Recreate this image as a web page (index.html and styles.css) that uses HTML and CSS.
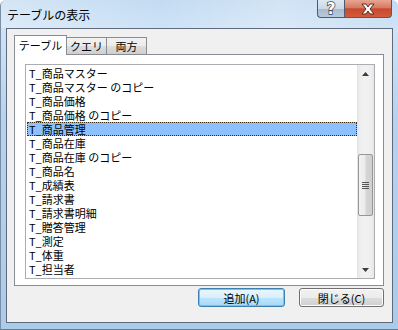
FILE: index.html
```html
<!DOCTYPE html>
<html lang="ja">
<head>
<meta charset="utf-8">
<link rel="stylesheet" href="styles.css">
</head>
<body>
<div class="window">
  <div class="titlebar">
    <span class="title">テーブルの表示</span>
    <div class="caption-btns">
      <div class="cbtn help"><span>?</span></div>
      <div class="cbtn close">
        <svg width="16" height="12" viewBox="0 0 16 12">
          <path d="M2 1 L6 1 L8 4 L10 1 L14 1 L10 6 L14 11 L10 11 L8 8 L6 11 L2 11 L6 6 Z" fill="#fff" stroke="#5a2a20" stroke-width="1" stroke-linejoin="round"/>
        </svg>
      </div>
    </div>
  </div>
  <div class="client">
    <div class="tabctl">
      <div class="tablist">
        <div class="tab active">テーブル</div>
        <div class="tab">クエリ</div>
        <div class="tab">両方</div>
      </div>
      <div class="panel">
        <div class="listbox">
          <ul class="items">
            <li>T_商品マスター</li>
            <li>T_商品マスター のコピー</li>
            <li>T_商品価格</li>
            <li>T_商品価格 のコピー</li>
            <li class="selected">T_商品管理</li>
            <li>T_商品在庫</li>
            <li>T_商品在庫 のコピー</li>
            <li>T_商品名</li>
            <li>T_成績表</li>
            <li>T_請求書</li>
            <li>T_請求書明細</li>
            <li>T_贈答管理</li>
            <li>T_測定</li>
            <li>T_体重</li>
            <li>T_担当者</li>
          </ul>
          <div class="scrollbar">
            <div class="arrow up"><svg width="7" height="4" viewBox="0 0 7 4"><path d="M3.5 0 L7 4 L0 4 Z" fill="#3c3c3c"/></svg></div>
            <div class="track">
              <div class="spacer-top"></div>
              <div class="thumb">
                <div class="grip"><i></i><i></i><i></i><i></i></div>
              </div>
            </div>
            <div class="arrow down"><svg width="7" height="4" viewBox="0 0 7 4"><path d="M0 0 L7 0 L3.5 4 Z" fill="#3c3c3c"/></svg></div>
          </div>
        </div>
      </div>
    </div>
    <div class="buttons">
      <button class="btn default">追加(A)</button>
      <button class="btn">閉じる(C)</button>
    </div>
  </div>
</div>
</body>
</html>
```

FILE: styles.css
```css
* { box-sizing: border-box; }
html, body {
  margin: 0;
  padding: 0;
  background: #ffffff;
}
body {
  font-family: "Noto Sans CJK JP", "Noto Sans", sans-serif;
  font-size: 11px;
  color: #000;
}
.window {
  width: 398px;
  height: 330px;
  display: flex;
  flex-direction: column;
  background: linear-gradient(180deg, #c2dbf2 0px, #cfe3f6 30px, #b6d2ef 120px, #abcbeb 330px);
  border-radius: 6px 6px 0 0;
  border-left: 1px solid #7a8ea6;
  border-bottom: 1px solid #6a7c92;
}
.titlebar {
  height: 28px;
  flex: none;
  display: flex;
  align-items: flex-start;
  justify-content: space-between;
  padding-left: 6px;
  background: linear-gradient(90deg, rgba(255,255,255,0.3), rgba(255,255,255,0) 40%, rgba(255,255,255,0.25) 70%, rgba(255,255,255,0));
}
.title {
  margin-top: 7px;
  font-size: 12px;
  line-height: 16px;
  color: #000;
}
.caption-btns {
  display: flex;
  margin-right: 6px;
}
.cbtn {
  height: 18px;
  border: 1px solid #4d5b6e;
  border-top: none;
  display: flex;
  align-items: center;
  justify-content: center;
}
.help {
  width: 27px;
  border-radius: 0 0 0 4px;
  border-right: none;
  background: linear-gradient(180deg, #dfe8f2 0%, #cbd8e6 50%, #a9bbd0 52%, #b8c9dc 100%);
}
.help span {
  font-family: "DejaVu Sans", sans-serif;
  font-weight: bold;
  font-size: 15px;
  line-height: 16px;
  color: #fff;
  -webkit-text-stroke: 1.5px #3d4a5c;
  paint-order: stroke fill;
}
.close {
  width: 48px;
  border-radius: 0 0 4px 0;
  background: linear-gradient(180deg, #e8a593 0%, #d77a63 45%, #c74a2f 52%, #d45a3c 100%);
}
.client {
  flex: 1;
  margin: 0 5px 7px 5px;
  border: 1px solid #5f6b7b;
  background: #f0f0f0;
  padding: 6px 8px 15px 7px;
  display: flex;
  flex-direction: column;
}
.tabctl {
  display: flex;
  flex-direction: column;
}
.tablist {
  display: flex;
  align-items: flex-end;
  height: 19px;
  position: relative;
  z-index: 1;
}
.tab {
  height: 17px;
  width: 40px;
  border: 1px solid #898c95;
  border-bottom: none;
  border-left: none;
  background: linear-gradient(180deg, #f2f2f2 0%, #ebebeb 50%, #dddddd 51%, #cfcfcf 100%);
  text-align: center;
  line-height: 16px;
  font-size: 11px;
}
.tab.active {
  width: 53px;
  height: 20px;
  margin-bottom: -1px;
  border-left: 1px solid #898c95;
  background: #ffffff;
  line-height: 19px;
}
.panel {
  height: 232px;
  border: 1px solid #898c95;
  background: #ffffff;
  padding: 9px 8px 6px 10px;
}
.listbox {
  height: 215px;
  border: 1px solid #abadb3;
  background: #fff;
  display: flex;
}
.items {
  list-style: none;
  margin: 0;
  padding: 1px 0 0 1px;
  flex: 1;
  overflow: hidden;
}
.items li {
  height: 14px;
  line-height: 14px;
  padding-left: 2px;
  white-space: nowrap;
  font-size: 11px;
}
.items li.selected {
  background: #8cc0ff;
  outline: 1px dotted #3a2a10;
  outline-offset: -1px;
}
.scrollbar {
  width: 17px;
  flex: none;
  display: flex;
  flex-direction: column;
  background: linear-gradient(90deg, #e3e3e3 0px, #eeeeee 3px, #f2f2f2 8px, #eeeeee 14px, #e6e6e6 17px);
}
.arrow {
  height: 17px;
  flex: none;
  display: flex;
  align-items: center;
  justify-content: center;
}
.arrow.up { padding-top: 1px; }
.track {
  flex: 1;
  display: flex;
  flex-direction: column;
  padding: 0 1px;
}
.spacer-top { height: 72px; flex: none; }
.thumb {
  height: 62px;
  border: 1px solid #979797;
  border-radius: 2px;
  background: linear-gradient(90deg, #f2f2f2 0%, #ebebeb 45%, #d6d6d6 55%, #cfcfcf 100%);
  display: flex;
  align-items: center;
  justify-content: center;
}
.grip {
  display: flex;
  flex-direction: column;
  gap: 1px;
}
.grip i {
  display: block;
  width: 7px;
  height: 1px;
  background: #555;
}
.buttons {
  margin-top: 2px;
  display: flex;
  justify-content: flex-end;
  gap: 14px;
}
.btn {
  height: 19px;
  width: 85px;
  padding: 0;
  font-family: "Noto Sans CJK JP", "Noto Sans", sans-serif;
  font-size: 11px;
  line-height: 16px;
  color: #000;
  border: 1px solid #707070;
  border-radius: 3px;
  background: linear-gradient(180deg, #f2f2f2 0%, #ebebeb 50%, #dddddd 51%, #cfcfcf 100%);
  box-shadow: inset 0 0 0 1px #fcfcfc;
}
.btn.default {
  width: 87px;
  border-color: #3c7fb1;
  box-shadow: inset 0 0 0 1px #48d8fb;
  background: linear-gradient(180deg, #eaf6fd 0%, #d9f0fc 50%, #bee6fd 51%, #a7d9f5 100%);
}
```
